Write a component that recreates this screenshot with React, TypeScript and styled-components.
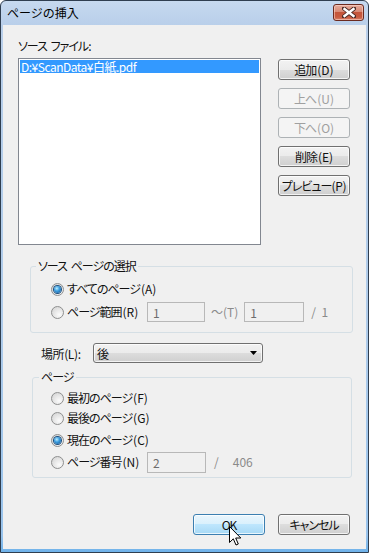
import React from "react";
import styled, { createGlobalStyle } from "styled-components";

const Global = createGlobalStyle`
  html, body { margin: 0; padding: 0; background: #ffffff; }
  body {
    font-family: "Noto Sans CJK JP", "Noto Sans", sans-serif;
    font-size: 12px;
    color: #111;
  }
  * { box-sizing: border-box; }
`;

const Window = styled.div`
  position: relative;
  width: 369px;
  height: 553px;
  border: 1px solid #2f3e50;
  border-radius: 6px 6px 0 0;
  background: linear-gradient(
    to bottom,
    #c6d9ef 0px,
    #b9cfea 24px,
    #aecbea 60%,
    #98c3ec 97%,
    #6fb2ea 100%
  );
  display: flex;
  flex-direction: column;
  overflow: hidden;
`;

const TitleBar = styled.div`
  height: 24px;
  flex-shrink: 0;
  display: flex;
  justify-content: space-between;
  align-items: flex-start;
  padding: 0 4px 0 6px;
`;

const TitleText = styled.div`
  font-size: 12px;
  line-height: 14px;
  margin-top: 5px;
  color: #000;
`;

const CloseButton = styled.div`
  margin-top: 3px;
  width: 31px;
  height: 17px;
  border: 1px solid #6b2a1f;
  border-radius: 3px;
  background: linear-gradient(
    to bottom,
    #e6ab9c 0%,
    #d88a75 45%,
    #c4553a 50%,
    #c85a3f 80%,
    #d6826a 100%
  );
  box-shadow: inset 0 0 0 1px rgba(255, 220, 210, 0.55);
  display: flex;
  align-items: center;
  justify-content: center;
`;

const Client = styled.div`
  flex: 1;
  margin: 0 2px 3px 2px;
  background: #f0f0f0;
  display: flex;
  flex-direction: column;
`;

const FileLabel = styled.div`
  margin: 14px 0 0 15px;
  line-height: 14px;
  height: 14px;
  font-feature-settings: "palt";
  letter-spacing: -1px;
  word-spacing: 2px;
`;

const Key = styled.span<{ $tight?: boolean }>`
  letter-spacing: ${(p) => (p.$tight ? "-0.3px" : "0")};
  margin-left: ${(p) => (p.$tight ? 0 : 1)}px;
`;

const ListRow = styled.div`
  display: flex;
  align-items: flex-start;
  margin: 5px 0 0 15px;
`;

const ListBox = styled.div`
  width: 243px;
  height: 187px;
  background: #ffffff;
  border: 1px solid #828790;
  padding: 1px;
`;

const ListItem = styled.div<{ $selected?: boolean }>`
  height: 13px;
  line-height: 13px;
  padding-left: 1px;
  font-size: 12px;
  letter-spacing: -0.5px;
  background: ${(p) => (p.$selected ? "#3399ff" : "transparent")};
  color: ${(p) => (p.$selected ? "#ffffff" : "#000000")};
  white-space: nowrap;
`;

const ButtonColumn = styled.div`
  display: flex;
  flex-direction: column;
  gap: 8px;
  margin: 1px 0 0 17px;
`;

const Button = styled.div<{ $disabled?: boolean; $hot?: boolean }>`
  width: 72px;
  height: 21px;
  border-radius: 3px;
  border: 1px solid
    ${(p) => (p.$hot ? "#3c7fb1" : p.$disabled ? "#adb2b5" : "#707070")};
  background: ${(p) =>
    p.$hot
      ? "linear-gradient(to bottom, #eaf6fd 0%, #d9f0fc 50%, #bee6fd 50%, #a7d9f5 100%)"
      : p.$disabled
      ? "#f4f4f4"
      : "linear-gradient(to bottom, #f2f2f2 0%, #ebebeb 50%, #dddddd 50%, #cfcfcf 100%)"};
  box-shadow: ${(p) =>
    p.$disabled ? "none" : "inset 0 0 0 1px rgba(255,255,255,0.75)"};
  color: ${(p) => (p.$disabled ? "#a0a0a0" : "#111111")};
  display: flex;
  align-items: center;
  justify-content: center;
  font-size: 12px;
  line-height: 14px;
  font-feature-settings: "palt";
  letter-spacing: -1px;
  white-space: nowrap;
`;

const Group = styled.div<{ $width: number; $height: number; $ml: number; $mt: number; $pt: number; $pl: number }>`
  position: relative;
  width: ${(p) => p.$width}px;
  height: ${(p) => p.$height}px;
  margin: ${(p) => p.$mt}px 0 0 ${(p) => p.$ml}px;
  border: 1px solid #d5dfe5;
  border-radius: 3px;
  padding: ${(p) => p.$pt}px 0 0 ${(p) => p.$pl}px;
  display: flex;
  flex-direction: column;
`;

const Legend = styled.span<{ $left: number }>`
  position: absolute;
  top: -8px;
  left: ${(p) => p.$left}px;
  padding: 0 2px;
  background: #f0f0f0;
  line-height: 14px;
  font-feature-settings: "palt";
  letter-spacing: -1px;
  word-spacing: 2px;
  white-space: nowrap;
`;

const RadioRow = styled.div<{ $mt?: number }>`
  display: flex;
  align-items: center;
  height: 20px;
  margin-top: ${(p) => p.$mt ?? 0}px;
`;

const Radio = styled.span<{ $checked?: boolean }>`
  width: 13px;
  height: 13px;
  flex-shrink: 0;
  border-radius: 50%;
  border: 1px solid #8e8f8f;
  background: radial-gradient(
    circle at 65% 70%,
    #fbfbfb 0%,
    #e8e8e8 45%,
    #cfcfcf 100%
  );
  display: flex;
  align-items: center;
  justify-content: center;
  margin-right: 3px;
  &::after {
    content: "";
    display: ${(p) => (p.$checked ? "block" : "none")};
    width: 7px;
    height: 7px;
    border-radius: 50%;
    background: radial-gradient(
      circle at 40% 35%,
      #bfefff 0%,
      #3d9fe0 40%,
      #0f4f8f 100%
    );
    box-shadow: 0 0 0 1px #1b4e7e;
  }
`;

const RadioText = styled.span<{ $width?: number }>`
  font-feature-settings: "palt";
  letter-spacing: -1px;
  white-space: nowrap;
  line-height: 14px;
  ${(p) => (p.$width ? `width: ${p.$width}px;` : "")}
`;

const TextInput = styled.div<{ $width: number; $height?: number; $ml?: number }>`
  width: ${(p) => p.$width}px;
  height: ${(p) => p.$height ?? 20}px;
  margin-left: ${(p) => p.$ml ?? 0}px;
  border: 1px solid #b8b8b8;
  background: #f0f0f0;
  color: #6d6d6d;
  padding-left: 5px;
  display: flex;
  align-items: center;
  flex-shrink: 0;
`;

const DimText = styled.span<{ $ml: number }>`
  margin-left: ${(p) => p.$ml}px;
  color: #8a8a8a;
  white-space: nowrap;
  line-height: 14px;
`;

const LocationRow = styled.div`
  display: flex;
  align-items: center;
  height: 20px;
  margin: 10px 0 0 38px;
`;

const LocationLabel = styled.span`
  width: 52px;
  white-space: nowrap;
  letter-spacing: -0.4px;
`;

const Select = styled.div`
  width: 170px;
  height: 20px;
  border: 1px solid #707070;
  border-radius: 3px;
  background: linear-gradient(to bottom, #f2f2f2 0%, #ebebeb 50%, #dddddd 50%, #cfcfcf 100%);
  box-shadow: inset 0 0 0 1px rgba(255, 255, 255, 0.75);
  display: flex;
  align-items: center;
  justify-content: space-between;
  padding: 0 5px 0 3px;
`;

const Footer = styled.div`
  display: flex;
  justify-content: flex-end;
  gap: 13px;
  margin-top: 36px;
  padding-right: 16px;
`;

const Cursor = styled.svg`
  position: absolute;
  left: 227px;
  top: 524px;
`;

export default function App() {
  return (
    <>
      <Global />
      <Window>
        <TitleBar>
          <TitleText>ページの挿入</TitleText>
          <CloseButton>
            <svg width="14" height="11" viewBox="0 0 14 11">
              <path
                d="M2 1.5 L12 9.5 M12 1.5 L2 9.5"
                stroke="#4a2a24"
                strokeWidth="4.2"
                strokeLinecap="square"
              />
              <path
                d="M2.5 2 L11.5 9 M11.5 2 L2.5 9"
                stroke="#ffffff"
                strokeWidth="2.4"
                strokeLinecap="square"
              />
            </svg>
          </CloseButton>
        </TitleBar>
        <Client>
          <FileLabel>ソース ファイル:</FileLabel>
          <ListRow>
            <ListBox>
              <ListItem $selected>D:¥ScanData¥白紙.pdf</ListItem>
            </ListBox>
            <ButtonColumn>
              <Button>追加<Key>(D)</Key></Button>
              <Button $disabled>上へ<Key>(U)</Key></Button>
              <Button $disabled>下へ<Key>(O)</Key></Button>
              <Button>削除<Key>(E)</Key></Button>
              <Button>プレビュー<Key $tight>(P)</Key></Button>
            </ButtonColumn>
          </ListRow>

          <Group $width={323} $height={67} $ml={27} $mt={21} $pt={12} $pl={20}>
            <Legend $left={5}>ソース ページの選択</Legend>
            <RadioRow>
              <Radio $checked />
              <RadioText>すべてのページ<Key>(A)</Key></RadioText>
            </RadioRow>
            <RadioRow $mt={3}>
              <Radio />
              <RadioText $width={80}>ページ範囲<Key>(R)</Key></RadioText>
              <TextInput $width={58}>1</TextInput>
              <DimText $ml={6}>～(T)</DimText>
              <TextInput $width={60} $ml={6}>1</TextInput>
              <DimText $ml={7}>/&nbsp;&nbsp;1</DimText>
            </RadioRow>
          </Group>

          <LocationRow>
            <LocationLabel>場所(L):</LocationLabel>
            <Select>
              <span>後</span>
              <svg width="7" height="4" viewBox="0 0 7 4">
                <path d="M0 0 H7 L3.5 4 Z" fill="#000" />
              </svg>
            </Select>
          </LocationRow>

          <Group $width={320} $height={101} $ml={29} $mt={14} $pt={10} $pl={18}>
            <Legend $left={6}>ページ</Legend>
            <RadioRow>
              <Radio />
              <RadioText>最初のページ<Key>(F)</Key></RadioText>
            </RadioRow>
            <RadioRow>
              <Radio />
              <RadioText>最後のページ<Key>(G)</Key></RadioText>
            </RadioRow>
            <RadioRow $mt={2}>
              <Radio $checked />
              <RadioText>現在のページ<Key>(C)</Key></RadioText>
            </RadioRow>
            <RadioRow $mt={2}>
              <Radio />
              <RadioText $width={80}>ページ番号<Key>(N)</Key></RadioText>
              <TextInput $width={59} $height={21}>2</TextInput>
              <DimText $ml={8}>/</DimText>
              <DimText $ml={14}>406</DimText>
            </RadioRow>
          </Group>

          <Footer>
            <Button $hot>OK</Button>
            <Button>キャンセル</Button>
          </Footer>
        </Client>
        <Cursor width="14" height="22" viewBox="0 0 14 22">
          <path
            d="M1.5 1.5 L1.5 17.5 L5.3 13.8 L8 20 L10.3 19 L7.7 13 L12.8 13 Z"
            fill="#ffffff"
            stroke="#000000"
            strokeWidth="1"
            strokeLinejoin="miter"
          />
        </Cursor>
      </Window>
    </>
  );
}
